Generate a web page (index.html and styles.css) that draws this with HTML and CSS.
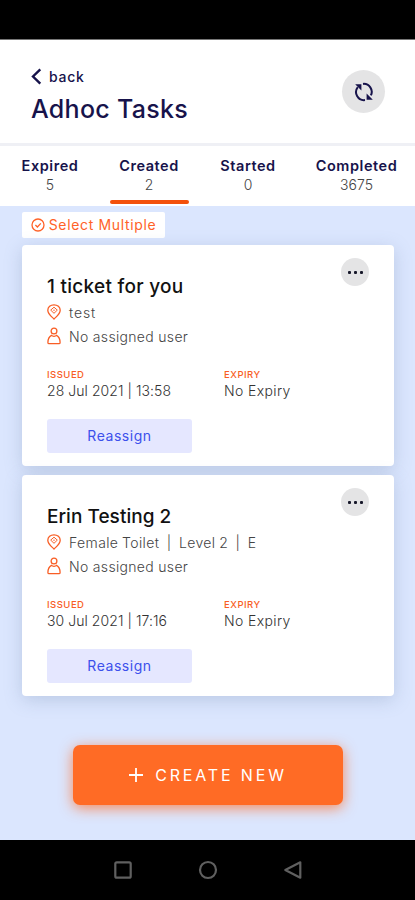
FILE: index.html
```html
<!DOCTYPE html>
<html lang="en">
<head>
<meta charset="utf-8">
<title>Adhoc Tasks</title>
<link rel="stylesheet" href="styles.css">
</head>
<body>
<svg class="defs" aria-hidden="true">
  <symbol id="pin" viewBox="0 0 14 16"><path d="M7 15C4.500 12.500.8 9.900.8 6.200.8 3 3.500.8 7 .8s6.200 2.200 6.200 5.400c0 3.700-3.700 6.300-6.200 8.800z"/><path d="M7 3.200 10.300 6.100 7 9.300 3.700 6.100z" stroke-width="1"/><circle cx="7" cy="6.200" r=".5" stroke-width=".6"/></symbol>
  <symbol id="user" viewBox="0 0 14 18"><circle cx="7" cy="4" r="2.900"/><path d="M4.500 8.400C2.300 9.500 1 12 .9 15.400c0 .8.4 1.300 1.100 1.300h10c.7 0 1.100-.5 1.100-1.300-.1-3.400-1.400-5.900-3.600-7C8.400 9.600 5.600 9.600 4.500 8.400z"/></symbol>
</svg>
<div class="status"></div>
<header class="header">
  <div>
    <div class="back"><svg width="11" height="17" viewBox="0 0 11 17"><path d="M9.300 1.300 2 8.500l7.300 7.200"/></svg><span>back</span></div>
    <h1>Adhoc Tasks</h1>
  </div>
  <button class="refresh" aria-label="Refresh"><svg width="20" height="20" viewBox="0 0 20 20"><path d="M9 1.900a8 8 0 0 1 7.900 11.500M11 18.100A8 8 0 0 1 3.800 5.200"/><path class="fill" d="M1.200 2.300h6.200v6.200zM18.800 17.700h-6.200v-6.200z"/></svg></button>
</header>
<nav class="tabs">
  <div class="tab"><b>Expired</b><span>5</span></div>
  <div class="tab active"><b>Created</b><span>2</span></div>
  <div class="tab"><b>Started</b><span>0</span></div>
  <div class="tab"><b>Completed</b><span>3675</span></div>
</nav>
<main>
  <button class="select"><svg width="14" height="14" viewBox="0 0 14 14"><circle cx="7" cy="7" r="6"/><path d="m4.400 7 2 2 3.400-3.600"/></svg><span>Select Multiple</span></button>
  <article class="card">
    <button class="more" aria-label="More"><i></i><i></i><i></i></button>
    <h2>1 ticket for you</h2>
    <p class="row"><svg width="14" height="16"><use href="#pin"/></svg><span class="short">test</span></p>
    <p class="row"><svg width="14" height="18"><use href="#user"/></svg><span>No assigned user</span></p>
    <dl><div><dt>ISSUED</dt><dd>28 Jul 2021 | 13:58</dd></div><div><dt>EXPIRY</dt><dd class="exp">No Expiry</dd></div></dl>
    <button class="reassign">Reassign</button>
  </article>
  <article class="card">
    <button class="more" aria-label="More"><i></i><i></i><i></i></button>
    <h2 class="plain">Erin Testing 2</h2>
    <p class="row"><svg width="14" height="16"><use href="#pin"/></svg><span class="place">Female Toilet&nbsp; |&nbsp; Level 2&nbsp; |&nbsp; E</span></p>
    <p class="row"><svg width="14" height="18"><use href="#user"/></svg><span>No assigned user</span></p>
    <dl><div><dt>ISSUED</dt><dd>30 Jul 2021 | 17:16</dd></div><div><dt>EXPIRY</dt><dd class="exp">No Expiry</dd></div></dl>
    <button class="reassign">Reassign</button>
  </article>
  <button class="create"><svg width="14" height="14" viewBox="0 0 14 14"><path d="M7 0v14M0 7h14"/></svg><span>CREATE NEW</span></button>
</main>
<footer class="sysnav">
  <svg width="20" height="20" viewBox="0 0 20 20"><rect x="2.300" y="2.300" width="15.400" height="15.400" rx="1.500"/></svg>
  <svg width="20" height="20" viewBox="0 0 20 20"><circle cx="10" cy="10" r="8"/></svg>
  <svg width="20" height="20" viewBox="0 0 20 20"><path d="M17.300 2.300v15.400L2.300 10z"/></svg>
</footer>
</body>
</html>
```
FILE: styles.css
```css
* { box-sizing: border-box; }
body { margin: 0; height: 900px; overflow: hidden; display: flex; flex-direction: column; background: #dbe6fe; font-family: "Inter", "Liberation Sans", sans-serif; color: #444; }
h1, h2, p, dl, dd { margin: 0; }
button { border: 0; padding: 0; font: inherit; display: flex; align-items: center; justify-content: center; }
svg { fill: none; stroke: currentColor; flex: none; }
.defs { position: absolute; width: 0; height: 0; }
.status { height: 40px; background: #000; border-bottom: 1px solid #777; }
.header { height: 106px; background: #fff; border-bottom: 3px solid #eff0f5; padding: 26px 30px 0 31px; display: flex; justify-content: space-between; color: #17134b; }
.back { display: flex; align-items: center; gap: 7px; height: 20px; font-size: 14px; font-weight: 500; letter-spacing: .75px; }
.back svg { stroke-width: 2.400; }
h1 { font-size: 25px; line-height: 30px; margin-top: 8px; font-weight: 500; letter-spacing: .3px; white-space: nowrap; }
.refresh { width: 43px; height: 43px; border-radius: 50%; background: #e4e4e5; margin-top: 4px; color: #17134b; }
.refresh svg { stroke-width: 2; }
.fill { fill: currentColor; stroke: none; }
.tabs { height: 60px; background: #fff; display: grid; grid-template-columns: 100px 98px 100px 117px; }
.tab { display: flex; flex-direction: column; align-items: center; padding-top: 10px; }
.tab b { color: #17134b; font-size: 14.500px; line-height: 19px; font-weight: 600; letter-spacing: .55px; }
.tab span { font-size: 14px; line-height: 20px; font-weight: 300; color: #444; }
.active::after { content: ""; width: 79px; height: 4px; background: #f4510b; border-radius: 2px; margin-top: 5px; }
main { height: 634px; display: flex; flex-direction: column; padding: 6px 21px 0 22px; }
.select { width: 143px; height: 26px; background: #fff; color: #ff6228; border-radius: 2px; gap: 4px; font-size: 14px; letter-spacing: .65px; padding-bottom: 1px; margin-bottom: 7px; white-space: nowrap; flex: none; }
.select svg { stroke-width: 1.300; }
.card { position: relative; height: 221px; flex: none; background: #fff; border-radius: 4px; margin-bottom: 9px; padding: 28px 25px 0; box-shadow: 0 4px 18px rgba(100,125,160,.28); }
.more { position: absolute; right: 25px; top: 13px; width: 28px; height: 28px; border-radius: 50%; background: #e4e4e5; gap: 3px; }
.more i { width: 3px; height: 3px; border-radius: 1px; background: #17182a; }
h2 { color: #111; font-size: 19px; line-height: 27px; font-weight: 500; white-space: nowrap; letter-spacing: .27px; }
.plain { letter-spacing: .03px; }
.row { display: flex; align-items: center; gap: 8px; height: 24px; font-size: 14px; font-weight: 300; color: #444; white-space: pre; letter-spacing: .32px; }
.row svg { color: #f85e25; stroke-width: 1.300; }
.short { letter-spacing: .9px; }
.place { letter-spacing: .38px; word-spacing: -.6px; }
dl { display: grid; grid-template-columns: 177px 1fr; margin-top: 20px; }
dt { color: #f85e25; font-size: 9.500px; line-height: 13px; font-weight: 500; letter-spacing: .5px; }
dd { font-size: 14px; line-height: 20px; font-weight: 300; color: #333; white-space: nowrap; letter-spacing: .06px; }
.exp { letter-spacing: .38px; }
.reassign { width: 145px; height: 34px; margin-top: 18px; padding-bottom: 1px; background: #e5e7ff; color: #3c50ec; border-radius: 3px; font-size: 14px; letter-spacing: .55px; }
.create { width: 270px; height: 60px; flex: none; margin: 40px 0 0 51px; background: #ff6b25; color: #fff; border-radius: 7px; gap: 12px; font-size: 16px; letter-spacing: 2.850px; box-shadow: 0 3px 14px rgba(255,107,37,.75); }
.create svg { stroke-width: 1.800; }
.sysnav { height: 60px; background: #000; color: #606060; display: flex; justify-content: center; align-items: center; gap: 65px; }
.sysnav svg { stroke-width: 2.200; stroke-linejoin: round; }
```
